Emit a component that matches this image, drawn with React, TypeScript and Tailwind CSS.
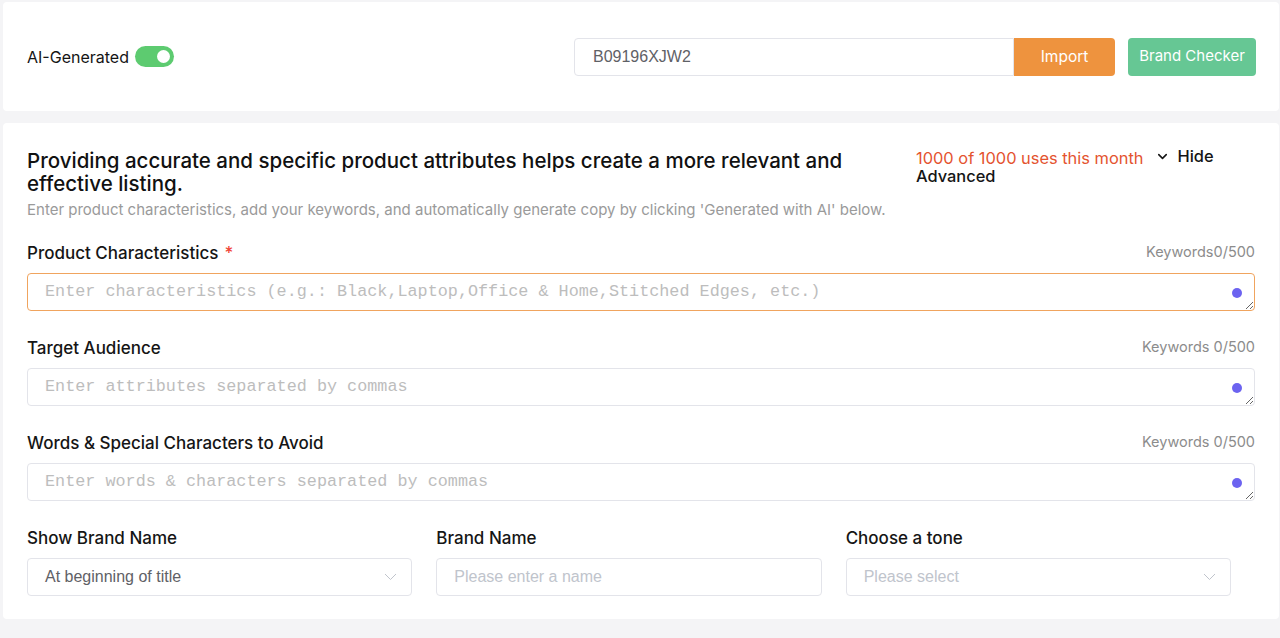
import { ChevronDown } from 'lucide-react'

const ui = { fontFamily: 'Inter, "Noto Sans", sans-serif' }
const arial = { fontFamily: '"Liberation Sans", Arial, sans-serif' }
const mono = { fontFamily: '"Liberation Mono", "Courier New", monospace' }

function Counter({ text }: { text: string }) {
  return <span className="mt-[2px] text-[14.5px] leading-[18px] text-[#8c8c8c]">{text}</span>
}

function Field({
  label,
  required,
  counter,
  placeholder,
  focused,
}: {
  label: string
  required?: boolean
  counter: string
  placeholder: string
  focused?: boolean
}) {
  return (
    <div className="flex flex-col">
      <div className="flex items-start justify-between h-6">
        <span className="text-[17px] leading-6 font-medium text-[#151515]">
          {label}
          {required && <span className="ml-1.5 text-[#f04438]">*</span>}
        </span>
        <Counter text={counter} />
      </div>
      <div className="relative mt-[8px]">
        <textarea
          rows={1}
          autoFocus={focused}
          placeholder={placeholder}
          style={mono}
          className={
            'block w-full h-[38px] resize-y rounded-[4px] border bg-white px-[17px] py-[7px] text-[16.8px] leading-[22px] text-[#333] outline-none placeholder:text-[#bdbdbd] ' +
            (focused ? 'border-[#f0a45e]' : 'border-[#e3e4ea]')
          }
        />
        {/* grammar helper dot */}
        <span className="absolute right-[13px] top-[15px] w-[10px] h-[10px] rounded-full bg-[#6c63f0]" />
      </div>
    </div>
  )
}

function Chevron() {
  return (
    <svg width="13" height="8" viewBox="0 0 13 8" fill="none">
      <path d="M1 1l5.5 5.5L12 1" stroke="#c0c4cc" strokeWidth="1" />
    </svg>
  )
}

export default function App() {
  return (
    <div className="min-h-[638px] bg-[#f4f4f6] pt-[2px] pl-[3px] pr-px pb-5 text-[#151515]" style={ui}>
      {/* top bar */}
      <div className="flex items-center h-[109px] bg-white rounded-[4px] pl-6 pr-[23px]">
        <div className="flex items-center gap-[6px]">
          <span className="text-[16px]">AI-Generated</span>
          <span className="flex items-center justify-end w-[39px] h-[21px] rounded-full bg-[#5dcb70] pr-[4px]">
            <span className="w-[13px] h-[13px] rounded-full bg-white" />
          </span>
        </div>
        <div className="ml-auto flex items-center">
          <div
            style={arial}
            className="flex items-center w-[440px] h-[38px] border border-[#e3e4ea] rounded-l-[4px] pl-[18px] text-[16px] text-[#5f6166]"
          >
            B09196XJW2
          </div>
          <button className="h-[38px] w-[101px] rounded-r-[4px] bg-[#ee933e] text-[15.5px] text-white">Import</button>
          <button className="ml-[13px] h-[38px] w-[128px] rounded-[4px] bg-[#66c794] text-[15px] text-white">
            Brand Checker
          </button>
        </div>
      </div>

      {/* form card */}
      <div className="mt-3 bg-white rounded-[4px] px-6 pt-[26px] pb-[23px]">
        <div className="flex">
          <div className="flex-1">
            <h2 className="text-[20.5px] leading-[23px] font-medium text-[#111]">
              Providing accurate and specific product attributes helps create a more relevant and
              <br />
              effective listing.
            </h2>
            <p className="mt-[5px] text-[15px] leading-5 text-[#9a9a9a]">
              Enter product characteristics, add your keywords, and automatically generate copy by clicking 'Generated
              with AI' below.
            </p>
          </div>
          <div className="w-[363px] shrink-0 pl-6 -mt-[2px] text-[16.4px] leading-[18px]">
            <span className="text-[#e4532f]">1000 of 1000 uses this month</span>
            <span className="ml-3 inline-flex items-center gap-[7px] font-medium">
              <ChevronDown size={15} strokeWidth={2.5} />
              Hide
            </span>
            <br />
            <span className="font-medium">Advanced</span>
          </div>
        </div>

        <div className="mt-[21px] flex flex-col gap-[25px]">
          <Field
            label="Product Characteristics"
            required
            counter="Keywords0/500"
            placeholder="Enter characteristics (e.g.: Black,Laptop,Office & Home,Stitched Edges, etc.)"
            focused
          />
          <Field label="Target Audience" counter="Keywords 0/500" placeholder="Enter attributes separated by commas" />
          <Field
            label="Words & Special Characters to Avoid"
            counter="Keywords 0/500"
            placeholder="Enter words & characters separated by commas"
          />

          <div className="grid grid-cols-3">
            <div className="pr-6">
              <div className="h-6 text-[17px] leading-6 font-medium">Show Brand Name</div>
              <div
                style={arial}
                className="mt-[8px] flex items-center justify-between h-[38px] rounded-[4px] border border-[#e3e4ea] pl-[17px] pr-[14px] text-[16px] text-[#5f6166]"
              >
                At beginning of title
                <Chevron />
              </div>
            </div>
            <div className="pr-6">
              <div className="h-6 text-[17px] leading-6 font-medium">Brand Name</div>
              <div
                style={arial}
                className="mt-[8px] flex items-center h-[38px] rounded-[4px] border border-[#e3e4ea] pl-[17px] text-[16px] text-[#c0c4cc]"
              >
                Please enter a name
              </div>
            </div>
            <div className="pr-6">
              <div className="h-6 text-[17px] leading-6 font-medium">Choose a tone</div>
              <div
                style={arial}
                className="mt-[8px] flex items-center justify-between h-[38px] rounded-[4px] border border-[#e3e4ea] pl-[17px] pr-[14px] text-[16px] text-[#c0c4cc]"
              >
                Please select
                <Chevron />
              </div>
            </div>
          </div>
        </div>
      </div>
    </div>
  )
}
